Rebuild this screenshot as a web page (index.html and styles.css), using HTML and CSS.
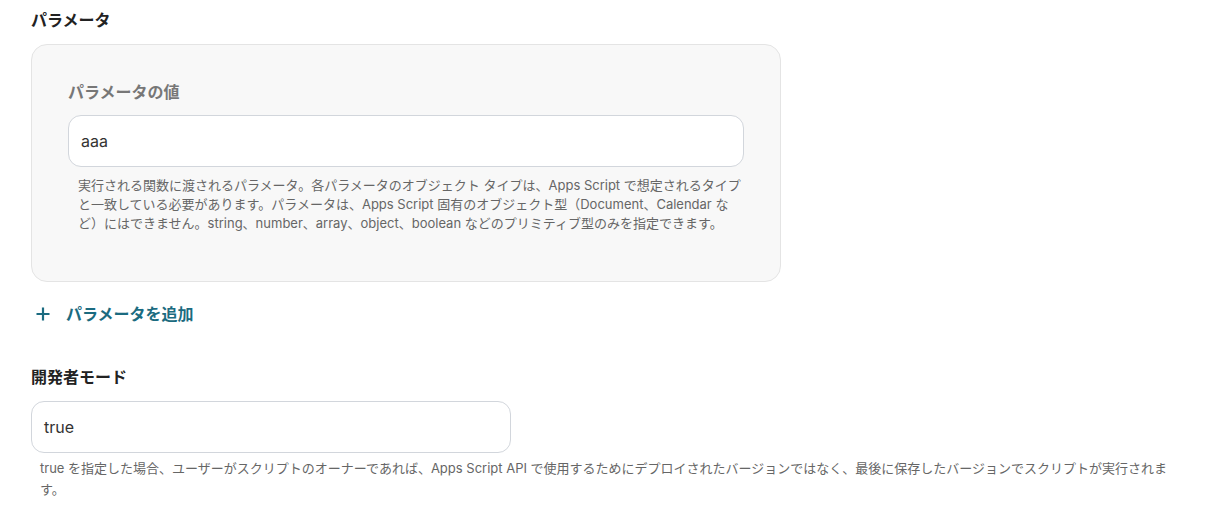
FILE: index.html
```html
<!DOCTYPE html>
<html lang="ja">
<head>
<meta charset="utf-8">
<link rel="stylesheet" href="styles.css">
</head>
<body>
<div class="page">
  <section class="field">
    <h2 class="title">パラメータ</h2>
    <div class="card">
      <label class="label">パラメータの値</label>
      <div class="input">aaa</div>
      <p class="help help-card">実行される関数に渡されるパラメータ。各パラメータのオブジェクト タイプは、Apps Script で想定されるタイプと一致している必要があります。パラメータは、Apps Script 固有のオブジェクト型（Document、Calendar など）にはできません。string、number、array、object、boolean などのプリミティブ型のみを指定できます。</p>
    </div>
    <button class="add" type="button">
      <svg class="plus" width="16" height="16" viewBox="0 0 16 16"><path d="M8 1.5v13M1.5 8h13" stroke="currentColor" stroke-width="2.2" fill="none"/></svg>
      <span>パラメータを追加</span>
    </button>
  </section>
  <section class="field dev">
    <h2 class="title">開発者モード</h2>
    <div class="input input-short">true</div>
    <p class="help help-wide">true を指定した場合、ユーザーがスクリプトのオーナーであれば、Apps Script API で使用するためにデプロイされたバージョンではなく、最後に保存したバージョンでスクリプトが実行されます。</p>
  </section>
</div>
</body>
</html>
```
FILE: styles.css
```css
* { box-sizing: border-box; }
html, body { margin: 0; padding: 0; background: #fff; }
body {
  font-family: Inter, "Noto Sans CJK JP", sans-serif;
  color: #222;
}
.page {
  padding: 8px 32px 0 31px;
  width: 1219px;
}
.title {
  margin: 0;
  font-size: 16px;
  line-height: 24px;
  font-weight: 700;
  color: #222;
}
.card {
  margin-top: 12px;
  width: 750px;
  background: #f8f8f8;
  border: 1px solid #e4e4e4;
  border-radius: 16px;
  padding: 36px 36px 48px 36px;
}
.label {
  display: block;
  font-size: 16px;
  line-height: 22px;
  font-weight: 700;
  color: #777;
}
.input {
  margin-top: 12px;
  height: 52px;
  background: #fff;
  border: 1px solid #d2d6dc;
  border-radius: 13px;
  padding: 0 12px;
  display: flex;
  align-items: center;
  font-size: 16px;
  color: #333;
}
.help {
  margin: 0;
  font-size: 13px;
  color: #666;
}
.help-card {
  margin: 9px -2px 0 0;
  padding: 0 0 0 10px;
  line-height: 19px;
}
.add {
  margin: 20px 0 0 0;
  padding: 0 0 0 4px;
  background: none;
  border: 0;
  display: flex;
  align-items: center;
  gap: 15px;
  font-family: inherit;
  font-size: 16px;
  line-height: 24px;
  font-weight: 700;
  color: #1b6b80;
  cursor: pointer;
}
.plus { display: block; }
.dev { margin-top: 39px; }
.input-short {
  margin-top: 12px;
  width: 480px;
}
.help-wide {
  margin-top: 5px;
  padding-left: 9px;
  line-height: 21px;
}
```
